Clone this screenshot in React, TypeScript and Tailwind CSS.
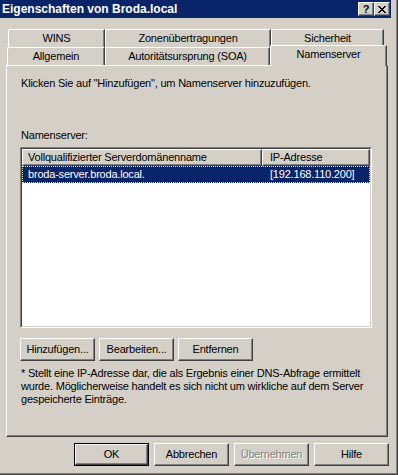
import React from "react";

const face = "bg-[#d4d0c8]";

function Button({
  label,
  isDefault,
  disabled,
  width = "w-[75px]",
}: {
  label: string;
  isDefault?: boolean;
  disabled?: boolean;
  width?: string;
}) {
  const inner = (
    <div
      className={`flex h-full w-full items-center justify-center ${face} border border-t-white border-l-white border-r-[#404040] border-b-[#404040] shadow-[inset_-1px_-1px_0_#808080] ${
        disabled ? "text-[#808080] [text-shadow:1px_1px_0_#ffffff]" : "text-black"
      }`}
    >
      {label}
    </div>
  );
  if (isDefault) {
    return <div className={`h-[23px] ${width} border border-black`}>{inner}</div>;
  }
  return <div className={`h-[23px] ${width}`}>{inner}</div>;
}

function Tab({
  label,
  width,
  selected,
}: {
  label: string;
  width: string;
  selected?: boolean;
}) {
  if (selected) {
    return (
      <div
        className={`relative z-10 -mt-[2px] -mb-[1px] h-[21px] ${width} ${face} flex items-center justify-center rounded-tl-[2px] border-t border-l border-t-white border-l-white border-r border-r-[#404040] shadow-[inset_-1px_0_0_#808080]`}
      >
        <span className="-mt-[3px]">{label}</span>
      </div>
    );
  }
  return (
    <div
      className={`h-[18px] ${width} ${face} flex items-center justify-center rounded-tl-[2px] border-t border-l border-t-white border-l-white border-r border-r-[#404040] shadow-[inset_-1px_0_0_#808080]`}
    >
      {label}
    </div>
  );
}

function TitleButton({ children }: { children: React.ReactNode }) {
  return (
    <div className="flex h-[14px] w-[16px] items-center justify-center bg-[#d4d0c8] border border-t-white border-l-white border-r-[#404040] border-b-[#404040] shadow-[inset_-1px_-1px_0_#808080]">
      {children}
    </div>
  );
}

export default function App() {
  return (
    <div className="flex h-[475px] w-[398px] flex-col overflow-hidden border-r border-b border-r-[#404040] border-b-[#404040] bg-[#d4d0c8] font-['Liberation_Sans',Arial,sans-serif] text-[11px] leading-[13px] tracking-[-0.2px] text-black shadow-[inset_-1px_-1px_0_#808080]">
      {/* Title bar */}
      <div className="flex h-[18px] w-[391px] shrink-0 items-center justify-between bg-[#0a246a] pl-[2px] pr-[1px]">
        <span className="text-[12px] font-bold tracking-normal text-white">Eigenschaften von Broda.local</span>
        <div className="flex">
          <TitleButton>
            <span className="text-[11px] font-bold leading-none text-black">?</span>
          </TitleButton>
          <TitleButton>
            <svg width="8" height="7" viewBox="0 0 8 7" shapeRendering="crispEdges">
              <path d="M0 0h2v1H0zM6 0h2v1H6zM1 1h2v1H1zM5 1h2v1H5zM2 2h4v1H2zM3 3h2v1H3zM2 4h4v1H2zM1 5h2v1H1zM5 5h2v1H5zM0 6h2v1H0zM6 6h2v1H6z" fill="#000" />
            </svg>
          </TitleButton>
        </div>
      </div>

      {/* Tabs */}
      <div className="mt-[11px] flex pl-[8px]">
        <Tab label="WINS" width="w-[97px]" />
        <Tab label="Zonenübertragungen" width="w-[166px]" />
        <Tab label="Sicherheit" width="w-[113px]" />
      </div>
      <div className="flex pl-[7px]">
        <Tab label="Allgemein" width="w-[98px]" />
        <Tab label="Autoritätsursprung (SOA)" width="w-[165px]" />
        <Tab label="Namenserver" width="w-[117px]" selected />
      </div>

      {/* Panel */}
      <div className="ml-[6px] flex h-[372px] w-[382px] shrink-0 flex-col border border-t-white border-l-white border-r-[#404040] border-b-[#404040] pl-[13px] pt-[11px] shadow-[inset_-1px_-1px_0_#808080]">
        <p className="pl-[1px]">Klicken Sie auf "Hinzufügen", um Namenserver hinzuzufügen.</p>
        <p className="mt-[39px] pl-[1px]">Namenserver:</p>

        {/* List view */}
        <div className="mt-[5px] h-[181px] w-[352px] border border-t-[#808080] border-l-[#808080] border-r-white border-b-white">
          <div className="h-full w-full border border-t-[#404040] border-l-[#404040] border-r-[#d4d0c8] border-b-[#d4d0c8] bg-white">
            <div className="flex h-[17px]">
              <div className="flex w-[240px] items-center border border-t-white border-l-white border-r-[#404040] border-b-[#404040] bg-[#d4d0c8] pl-[5px] shadow-[inset_-1px_-1px_0_#808080]">
                Vollqualifizierter Serverdomänenname
              </div>
              <div className="flex flex-1 items-center border border-t-white border-l-white border-r-[#404040] border-b-[#404040] bg-[#d4d0c8] pl-[7px] shadow-[inset_-1px_-1px_0_#808080]">
                IP-Adresse
              </div>
            </div>
            <div className="flex h-[17px] items-center border border-dotted border-[#e8e8a0] bg-[#0a246a] text-white">
              <span className="w-[240px] pl-[5px]">broda-server.broda.local.</span>
              <span className="pl-[7px]">[192.168.110.200]</span>
            </div>
          </div>
        </div>

        {/* Buttons */}
        <div className="mt-[10px] flex gap-[4px]">
          <Button label="Hinzufügen..." />
          <Button label="Bearbeiten..." />
          <Button label="Entfernen" />
        </div>

        <p className="mt-[6px] pl-[1px]">
          * Stellt eine IP-Adresse dar, die als Ergebnis einer DNS-Abfrage ermittelt
          <br />
          wurde. Möglicherweise handelt es sich nicht um wirkliche auf dem Server
          <br />
          gespeicherte Einträge.
        </p>
      </div>

      {/* Dialog buttons */}
      <div className="mt-[6px] flex justify-end gap-[5px] pr-[8px]">
        <Button label="OK" isDefault />
        <Button label="Abbrechen" />
        <Button label="Übernehmen" disabled />
        <Button label="Hilfe" />
      </div>
    </div>
  );
}
